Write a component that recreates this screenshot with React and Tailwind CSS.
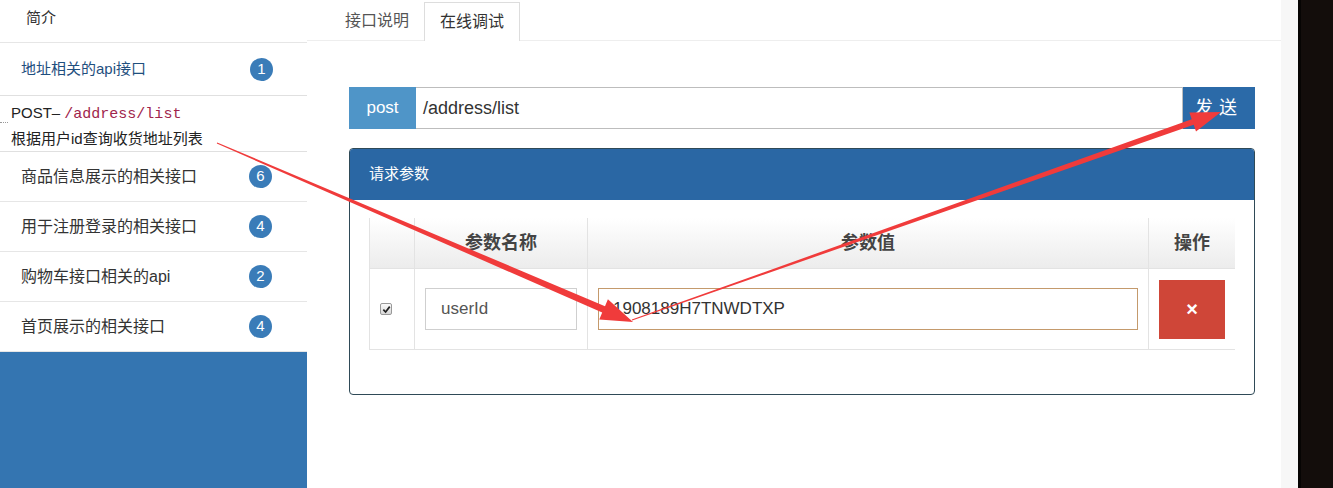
import React from 'react';

const font = { fontFamily: '"Liberation Sans", "Noto Sans CJK SC", sans-serif' };

const groups = [
  { name: '商品信息展示的相关接口', count: 6 },
  { name: '用于注册登录的相关接口', count: 4 },
  { name: '购物车接口相关的api', count: 2 },
  { name: '首页展示的相关接口', count: 4 },
];

const Badge = ({ n }) => (
  <span className="flex h-[23px] w-[23px] items-center justify-center rounded-full bg-[#3a7cb8] text-[15px] text-white">
    {n}
  </span>
);

const Sidebar = () => (
  <aside className="flex w-[307px] shrink-0 flex-col">
    <div className="h-[43px] border-b border-[#e6e6e6] pl-[26px] pt-[7px] text-[15px] text-[#333]">简介</div>
    <div className="flex h-[53px] items-center justify-between border-b border-[#e0e0e0] pl-[21px] pr-[34px]">
      <span className="text-[15px] text-[#1f4f7e]">地址相关的api接口</span>
      <Badge n={1} />
    </div>
    <div className="relative h-[56px] border-b border-[#e0e0e0] pl-[11px] pt-[5px] text-[15px] leading-[24px] text-[#222]">
      <span className="absolute left-0 top-[26px] w-[8px] border-t border-dotted border-[#999]" />
      <div>
        POST– <span className="text-[#a0244c]" style={{ fontFamily: '"Liberation Mono", monospace' }}>/address/list</span>
      </div>
      <div>根据用户id查询收货地址列表</div>
    </div>
    {groups.map((g) => (
      <div key={g.name} className="flex h-[50px] items-center justify-between border-b border-[#e6e6e6] pl-[21px] pr-[35px]">
        <span className="text-[16px] text-[#333]">{g.name}</span>
        <Badge n={g.count} />
      </div>
    ))}
    <div className="flex-1 bg-[#3475b1]" />
  </aside>
);

const Check = () => (
  <span className="flex h-[12px] w-[12px] items-center justify-center rounded-[2px] border border-[#999] bg-gradient-to-b from-[#fafafa] to-[#d8d8d8]">
    <svg viewBox="0 0 10 10" className="h-[9px] w-[9px]">
      <path d="M1.5 5.2 L4 7.8 L8.6 1.8" fill="none" stroke="#222" strokeWidth="1.9" />
    </svg>
  </span>
);

const Main = () => (
  <main className="flex flex-1 flex-col">
    <div className="flex h-[41px] items-end border-b border-[#eeeeee] pl-[23px]">
      <div className="flex h-[38px] items-center px-[15px] text-[16px] text-[#555]">接口说明</div>
      <div className="-mb-px flex h-[39px] items-center border border-b-0 border-[#dddddd] bg-white px-[15px] text-[16px] text-[#333]">
        在线调试
      </div>
    </div>

    <div className="pl-[42px] pr-[26px] pt-[46px]">
      <div className="flex h-[42px]">
        <div className="flex w-[67px] items-center justify-center bg-[#4f95c8] text-[17px] text-white">post</div>
        <div className="flex flex-1 items-center border border-l-0 border-[#bdbdbd] pl-[7px] text-[18px] text-[#333]">/address/list</div>
        <div className="flex w-[72px] items-center justify-center bg-[#2b6aa8] text-[18px] tracking-[6px] text-white">发送</div>
      </div>

      <div className="mt-[19px] overflow-hidden rounded-[4px] border border-[#2f4a57]">
        <div className="flex h-[51px] items-center bg-[#2a67a4] pl-[19px] text-[15px] text-white">请求参数</div>
        <div className="px-[19px] pb-[44px] pt-[18px]">
          <div className="grid grid-cols-[45px_173px_561px_86px] border-b border-l border-[#e3e3e3] text-[#444]">
            <div className="h-[50px] border-r border-[#e3e3e3] bg-gradient-to-b from-white to-[#ececec]" />
            <div className="flex h-[50px] items-center justify-center border-r border-[#e3e3e3] bg-gradient-to-b from-white to-[#ececec] text-[18px] font-bold">参数名称</div>
            <div className="flex h-[50px] items-center justify-center border-r border-[#e3e3e3] bg-gradient-to-b from-white to-[#ececec] text-[18px] font-bold">参数值</div>
            <div className="flex h-[50px] items-center justify-center bg-gradient-to-b from-white to-[#ececec] text-[18px] font-bold">操作</div>

            <div className="flex h-[81px] items-center border-r border-t border-[#e3e3e3] pl-[10px]">
              <Check />
            </div>
            <div className="flex h-[81px] items-center border-r border-t border-[#e3e3e3] px-[10px]">
              <div className="flex h-[42px] w-full items-center border border-[#cfcfcf] pl-[15px] text-[17px] text-[#555]">userId</div>
            </div>
            <div className="flex h-[81px] items-center border-r border-t border-[#e3e3e3] px-[10px]">
              <div className="flex h-[42px] w-full items-center border border-[#c49a6c] pl-[14px] text-[17px] text-[#333]">1908189H7TNWDTXP</div>
            </div>
            <div className="flex h-[81px] items-center justify-center border-t border-[#e3e3e3]">
              <div className="flex h-[59px] w-[66px] items-center justify-center bg-[#cf4638] text-[20px] font-bold text-white">×</div>
            </div>
          </div>
        </div>
      </div>
    </div>
  </main>
);

const Arrows = () => (
  <svg className="pointer-events-none absolute left-0 top-0" width="1333" height="488">
    <polygon
      fill="#f03b3b"
      points="217.2,142.4 605,306.2 607.9,299.3 633,322 599.3,319.5 602.2,312.6 216.8,143.6"
    />
    <polygon
      fill="#f03b3b"
      points="631.8,319.5 1191.7,119.2 1189.4,112.6 1221,112 1196,131.4 1193.7,124.8 632.2,320.5"
    />
  </svg>
);

export default function App() {
  return (
    <div className="relative flex h-[488px] w-[1333px] overflow-hidden bg-white" style={font}>
      <Sidebar />
      <Main />
      <div className="w-[17px] shrink-0 bg-[#f7f7f7]" />
      <div className="w-[36px] shrink-0 border-l-[3px] border-[#060403] bg-[#130d0b]" />
      <Arrows />
    </div>
  );
}
